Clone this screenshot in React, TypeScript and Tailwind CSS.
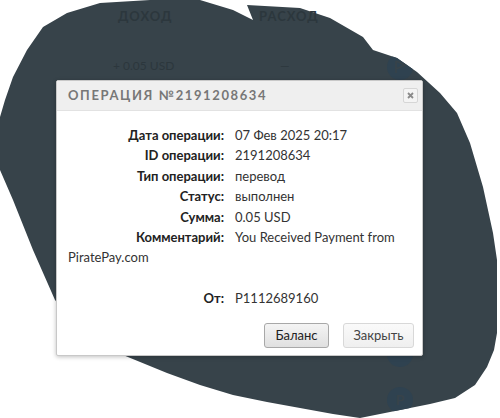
import React from 'react';

const rows: [string, string][] = [
  ['Дата операции:', '07 Фев 2025 20:17'],
  ['ID операции:', '2191208634'],
  ['Тип операции:', 'перевод'],
  ['Статус:', 'выполнен'],
  ['Сумма:', '0.05 USD'],
  ['Комментарий:', 'You Received Payment from'],
];

const BLOB =
  'M100 3 L150 0 L200 0 L233 10 L253 20 L247 5 L300 8 L330 18 L363 37 L373 50 L397 58 L417 72 L440 93 L457 113 L470 143 L483 187 L493 233 L497 260 L497 333 L494 350 L487 367 L475 385 L455 398 L430 404 L380 414 L360 418 L333 414 L300 408 L267 402 L233 395 L200 385 L167 373 L123 355 L80 330 L55 300 L33 250 L13 200 L0 170 L0 117 L5 100 L13 77 L27 50 L43 27 L67 13 Z';

// dark blob with the page behind it showing through faintly
function Blob() {
  return (
    <svg className="absolute inset-0" width="500" height="418" viewBox="0 0 500 418">
      <defs>
        <clipPath id="blob">
          <path d={BLOB} />
        </clipPath>
      </defs>
      <path fill="#37434a" d={BLOB} />
      <g clipPath="url(#blob)">
        <circle cx="400" cy="67" r="13" fill="#2f4250" />
        <path d="M396 61 L396 73 M396 61 L405 65 L396 69" stroke="#37434a" strokeWidth="1.8" fill="none" />
        <circle cx="400" cy="354" r="13" fill="#2f4250" />
        <circle cx="400" cy="400" r="13" fill="#2f4250" />
        <text x="400" y="405" textAnchor="middle" fontSize="14" fontWeight="700" fill="#37434a" fontFamily="Lato, sans-serif">
          P
        </text>
      </g>
    </svg>
  );
}

function Backdrop() {
  return (
    <div className="absolute inset-0 text-[#2c373d] font-['Lato',sans-serif]">
      <span className="absolute left-[118px] top-[7px] text-[13px] font-bold tracking-[1px]">ДОХОД</span>
      <span className="absolute left-[259px] top-[7px] text-[13px] font-bold tracking-[1px]">РАСХОД</span>
      <span className="absolute left-[113px] top-[57px] text-[12px]">+ 0.05 USD</span>
      <span className="absolute left-[280px] top-[57px] text-[12px]">—</span>
    </div>
  );
}

export default function App() {
  return (
    <div className="relative w-[500px] h-[418px] bg-white overflow-hidden font-['Lato',sans-serif]">
      <Blob />
      <Backdrop />

      <div className="relative pt-[80px] pl-[56px]">
        <div className="w-[367px] h-[276px] bg-white border border-[#c8c8c8] rounded-[2px] shadow-[0_1px_4px_rgba(0,0,0,0.25)] flex flex-col">
          {/* Header */}
          <div className="h-[30px] bg-[#efefef] border-b border-[#e2e2e2] flex items-center justify-between pl-[11px] pr-[4px]">
            <span className="text-[13px] tracking-[1.6px] text-[#777] font-bold">ОПЕРАЦИЯ №2191208634</span>
            <button className="w-[15px] h-[15px] border border-[#d6d6d6] rounded-[2px] bg-[#f4f4f4] flex items-center justify-center">
              <svg width="7" height="7" viewBox="0 0 7 7">
                <path d="M1 1 L6 6 M6 1 L1 6" stroke="#8a8a8a" strokeWidth="1.8" />
              </svg>
            </button>
          </div>

          {/* Body */}
          <div className="flex-1 px-[11px] pt-[14px] text-[13px] leading-[20.4px] text-[#333]">
            {rows.map(([label, value]) => (
              <div key={label}>
                <span className="inline-block w-[156px] text-right font-bold text-[#222]">{label}</span>
                <span className="ml-[11px]">{value}</span>
              </div>
            ))}
            <div>PiratePay.com</div>
            <div className="h-[20.4px]" />
            <div>
              <span className="inline-block w-[156px] text-right font-bold text-[#222]">От:</span>
              <span className="ml-[11px]">P1112689160</span>
            </div>
          </div>

          {/* Footer */}
          <div className="flex justify-end gap-[14px] pr-[8px] pb-[7px]">
            <button className="w-[65px] h-[25px] border border-[#a8a8a8] rounded-[3px] bg-gradient-to-b from-[#f4f4f4] to-[#e0e0e0] text-[13px] text-[#222]">
              Баланс
            </button>
            <button className="w-[71px] h-[25px] border border-[#d8d8d8] rounded-[3px] bg-gradient-to-b from-[#fafafa] to-[#efefef] text-[13px] text-[#444]">
              Закрыть
            </button>
          </div>
        </div>
      </div>
    </div>
  );
}
